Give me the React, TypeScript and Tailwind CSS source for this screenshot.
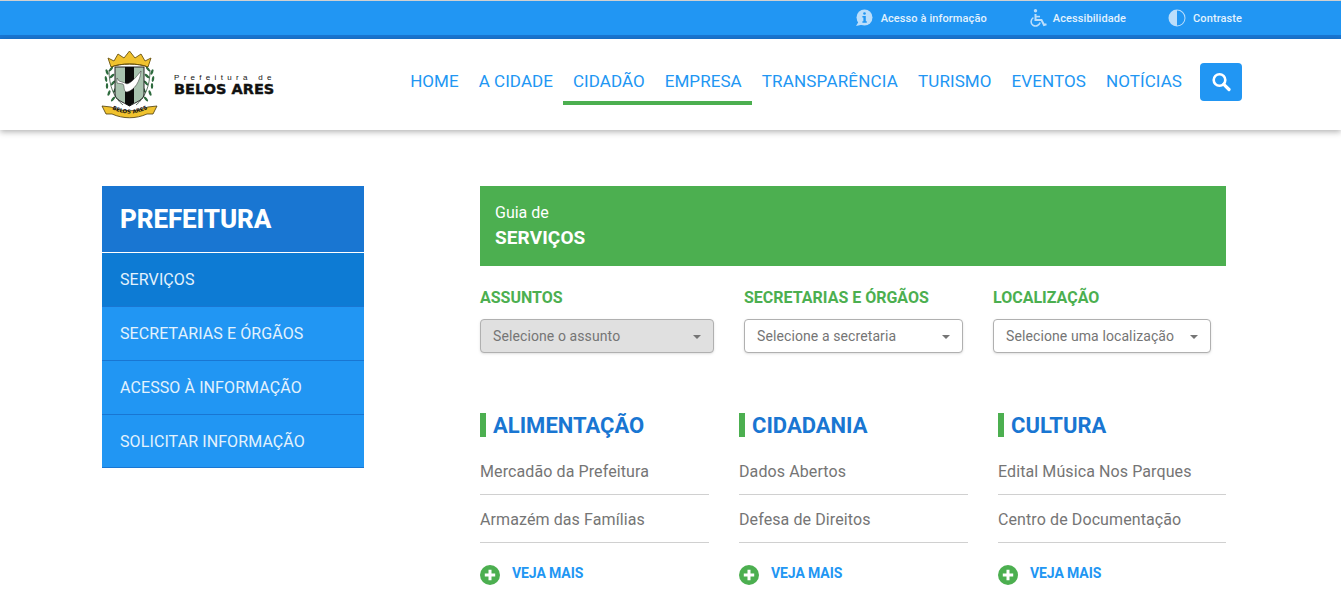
const navItems = ["HOME", "A CIDADE", "CIDADÃO", "EMPRESA", "TRANSPARÊNCIA", "TURISMO", "EVENTOS", "NOTÍCIAS"]
const sideItems = ["SERVIÇOS", "SECRETARIAS E ÓRGÃOS", "ACESSO À INFORMAÇÃO", "SOLICITAR INFORMAÇÃO"]

const filters = [
  { label: "ASSUNTOS", placeholder: "Selecione o assunto", box: "w-[234px] bg-[#e0e0e0]", col: "w-[264px]" },
  { label: "SECRETARIAS E ÓRGÃOS", placeholder: "Selecione a secretaria", box: "w-[219px] bg-white", col: "w-[249px]" },
  { label: "LOCALIZAÇÃO", placeholder: "Selecione uma localização", box: "w-[218px] bg-white", col: "w-[218px]" },
]

const categories = [
  { title: "ALIMENTAÇÃO", items: ["Mercadão da Prefeitura", "Armazém das Famílias"] },
  { title: "CIDADANIA", items: ["Dados Abertos", "Defesa de Direitos"] },
  { title: "CULTURA", items: ["Edital Música Nos Parques", "Centro de Documentação"] },
]

// folhas do louro: x, y, angulo
const leaves = [
  [9, 24, -20], [13, 21, 40], [8, 31, -10], [14, 28, 50], [9, 38, 0], [15, 35, 40],
  [11, 45, 20], [17, 42, 30], [15, 51, 40], [20, 48, 20],
]

function Logo() {
  return (
    <svg width="70" height="74" viewBox="0 0 70 74" className="-ml-[4px] shrink-0">
      <g fill="#2e6b3e">
        {leaves.map(([x, y, a]) => (
          <ellipse key={`l${x}-${y}`} cx={x} cy={y} rx="1.2" ry="3" transform={`rotate(${a} ${x} ${y})`} />
        ))}
        {leaves.map(([x, y, a]) => (
          <ellipse key={`r${x}-${y}`} cx={63 - x} cy={y} rx="1.2" ry="3" transform={`rotate(${-a} ${63 - x} ${y})`} />
        ))}
      </g>
      <path d="M11 22 C11 38 16 50 25 57 M52 22 C52 38 47 50 38 57" stroke="#1f3d27" strokeWidth="0.7" fill="none" />
      {/* escudo */}
      <path d="M17 19 H46 V46 C46 52 38 54 31.5 58 C25 54 17 52 17 46 Z" fill="#a8c2ae" stroke="#222" strokeWidth="1" />
      <path d="M27 19 H36 V55 L31.5 58 L27 55.5 Z" fill="#0c0c0c" />
      <path d="M19 30 L21 33 L27 35 C30 38 36 32 43 23 C42 33 37 42 29 44 C25 44 27 38 25 36 L19 35 Z" fill="#fff" stroke="#333" strokeWidth="0.5" />
      {/* coroa */}
      <path d="M10 10 L16 13 L20 6 L26 10 L31.5 3 L37 10 L43 6 L47 13 L53 10 L50 19 C40 15 23 15 13 19 Z" fill="#f0c22e" stroke="#6a5410" strokeWidth="0.9" />
      <path d="M13 19 C23 15 40 15 50 19" stroke="#6a5410" strokeWidth="1" fill="none" />
      {/* faixa */}
      <path d="M4 58 L13 59 C24 64 39 64 50 59 L59 58 L55 66 L49 66 C38 71 25 71 14 66 L8 66 Z" fill="#f0c22e" stroke="#4a3b0c" strokeWidth="0.8" />
      <path id="faixa-logo" d="M14 61 C25 67 38 67 49 61" fill="none" />
      <text fontSize="5.4" fontWeight="900" fill="#111" fontFamily="'DejaVu Sans',sans-serif">
        <textPath href="#faixa-logo">BELOS ARES</textPath>
      </text>
    </svg>
  )
}

function InfoBubbleIcon() {
  return (
    <svg width="18" height="18" viewBox="0 0 18 18" className="shrink-0">
      <circle cx="9.5" cy="8.5" r="8" fill="#bbdefb" />
      <path d="M4 12 L1 17 L8 15.5 Z" fill="#bbdefb" />
      <rect x="8.2" y="3.2" width="2.6" height="2.6" rx="1.3" fill="#2196f3" />
      <path d="M7.4 7 H10.8 V12.2 H11.8 V13.8 H7.4 V12.2 H8.4 V8.6 H7.4 Z" fill="#2196f3" />
    </svg>
  )
}

function WheelchairIcon() {
  return (
    <svg width="17" height="18" viewBox="0 0 17 18" className="shrink-0" fill="none" stroke="#bbdefb">
      <circle cx="5.5" cy="1.8" r="1.7" fill="#bbdefb" stroke="none" />
      <path d="M5.5 5 V11 H11.5 L14 16 L16.5 15.2" strokeWidth="2" />
      <path d="M5.5 7.6 H10" strokeWidth="1.6" />
      <path d="M3.4 8.6 C0.4 10.4 0.4 14.6 3 16.2 C5.8 17.8 9.2 16.6 10.2 13.6" strokeWidth="1.6" />
    </svg>
  )
}

function ContrastIcon() {
  return (
    <svg width="18" height="18" viewBox="0 0 18 18" className="shrink-0">
      <circle cx="9" cy="9" r="8.5" fill="#bbdefb" />
      <path d="M9 1.5 A7.5 7.5 0 0 1 9 16.5 Z" fill="#2196f3" />
    </svg>
  )
}

function SearchIcon() {
  return (
    <svg width="20" height="20" viewBox="0 0 20 20" fill="none" stroke="#fff">
      <circle cx="8.5" cy="8" r="5.8" strokeWidth="2.6" />
      <path d="M12.8 12.3 L18 17.5" strokeWidth="3.2" strokeLinecap="round" />
    </svg>
  )
}

function PlusIcon() {
  return (
    <svg width="20" height="20" viewBox="0 0 20 20" className="shrink-0">
      <circle cx="10" cy="10" r="10" fill="#4caf50" />
      <path d="M10 4.8 V15.2 M4.8 10 H15.2" stroke="#fff" strokeWidth="3" />
    </svg>
  )
}

export default function App() {
  return (
    <div className="h-[591px] overflow-hidden bg-white font-['Roboto',sans-serif]">
      {/* Top bar */}
      <div className="h-[39px] border-t border-t-[#d0d0d0] border-b-4 border-b-[#1976d2] bg-[#2196f3]">
        <div className="flex h-[34px] items-center justify-end pr-[99px] text-[11px] font-medium tracking-[0.1px] text-[#e3f2fd]">
          <div className="flex items-center gap-[8px]">
            <InfoBubbleIcon />
            <span className="pt-[2px]">Acesso à informação</span>
          </div>
          <div className="ml-[43px] flex items-center gap-[6px]">
            <WheelchairIcon />
            <span className="pt-[2px]">Acessibilidade</span>
          </div>
          <div className="ml-[42px] flex items-center gap-[7px]">
            <ContrastIcon />
            <span className="pt-[3px]">Contraste</span>
          </div>
        </div>
      </div>

      {/* Header */}
      <header className="relative flex h-[91px] items-start bg-white pl-[102px] pr-[99px] shadow-[0_2px_6px_rgba(0,0,0,0.3)]">
        <div className="mt-[9px] flex items-start">
          <Logo />
          <div className="ml-[6px] mt-[25px] text-[#111]">
            <div className="text-[8px] leading-[9px] tracking-[4.3px] font-['Liberation_Sans',sans-serif]">Prefeitura de</div>
            <div className="text-[14.5px] leading-[14px] font-bold font-['DejaVu_Sans',sans-serif] [-webkit-text-stroke:0.4px_#111]">BELOS ARES</div>
          </div>
        </div>
        <nav className="ml-auto mt-[24px] flex">
          {navItems.map((item, i) => (
            <a
              key={item}
              className={`h-[42px] px-[10px] pt-[7px] text-[17px] leading-[22px] text-[#2196f3] ${
                i < 4 ? "tracking-[0.05px]" : i === 4 ? "tracking-[0.2px]" : "tracking-[0.085px]"
              } ${item === "CIDADÃO" || item === "EMPRESA" ? "border-b-4 border-[#4caf50]" : ""}`}
            >
              {item}
            </a>
          ))}
        </nav>
        <button className="ml-[8px] mt-[24px] flex h-[38px] w-[42px] items-center justify-center rounded bg-[#2196f3]">
          <SearchIcon />
        </button>
      </header>

      {/* Body */}
      <main className="flex pl-[102px] pt-[56px]">
        <aside className="w-[262px] shrink-0">
          <div className="flex h-[66px] items-center bg-[#1976d2] pl-[18px] text-[26px] font-extrabold tracking-[-0.1px] text-white">
            PREFEITURA
          </div>
          <ul className="border-t border-white">
            {sideItems.map((item, i) => (
              <li
                key={item}
                className={`flex items-center border-b border-[#1976d2] pl-[18px] text-[16px] tracking-[0.1px] text-[#e3f2fd] ${
                  i === 0 ? "bg-[#0d7bd4]" : "bg-[#2196f3]"
                } ${i === 3 ? "h-[53px] pt-[1px]" : "h-[54px]"}`}
              >
                {item}
              </li>
            ))}
          </ul>
        </aside>

        <section className="ml-[116px] w-[746px]">
          <div className="flex h-[80px] flex-col justify-center bg-[#4caf50] pl-[15px] text-white">
            <div className="pt-[1px] text-[16px] leading-[20px]">Guia de</div>
            <div className="mt-[3px] text-[19px] leading-[24px] font-bold tracking-[0.1px]">SERVIÇOS</div>
          </div>

          <div className="mt-[22px] flex">
            {filters.map((f) => (
              <div key={f.label} className={f.col}>
                <div className="text-[16px] leading-[20px] font-bold text-[#4caf50]">{f.label}</div>
                <div
                  className={`mt-[11px] flex h-[34px] items-center justify-between rounded border border-[#b0b0b0] pl-[12px] pr-[12px] text-[14px] tracking-[0.1px] text-[#757575] shadow-sm ${f.box}`}
                >
                  <span>{f.placeholder}</span>
                  <span className="mt-[2px] h-0 w-0 border-x-[4px] border-t-[4px] border-x-transparent border-t-[#757575]" />
                </div>
              </div>
            ))}
          </div>

          <div className="mt-[60px] grid grid-cols-[229px_229px_228px] gap-x-[30px]">
            {categories.map((c) => (
              <div key={c.title}>
                <div className="flex h-[24px] items-center">
                  <span className="h-[24px] w-[6px] bg-[#4caf50]" />
                  <h2 className="ml-[7px] text-[22px] font-bold text-[#1976d2]">{c.title}</h2>
                </div>
                <ul className="mt-[10px]">
                  {c.items.map((it) => (
                    <li key={it} className="flex h-[48px] items-center border-b border-[#d0d0d0] pt-[3px] text-[16px] tracking-[0.1px] text-[#757575]">
                      {it}
                    </li>
                  ))}
                </ul>
                <div className="mt-[22px] flex items-center">
                  <PlusIcon />
                  <span className="ml-[12px] pb-[4px] text-[14px] leading-[16px] font-bold tracking-[-0.1px] text-[#2196f3]">VEJA MAIS</span>
                </div>
              </div>
            ))}
          </div>
        </section>
      </main>
    </div>
  )
}
